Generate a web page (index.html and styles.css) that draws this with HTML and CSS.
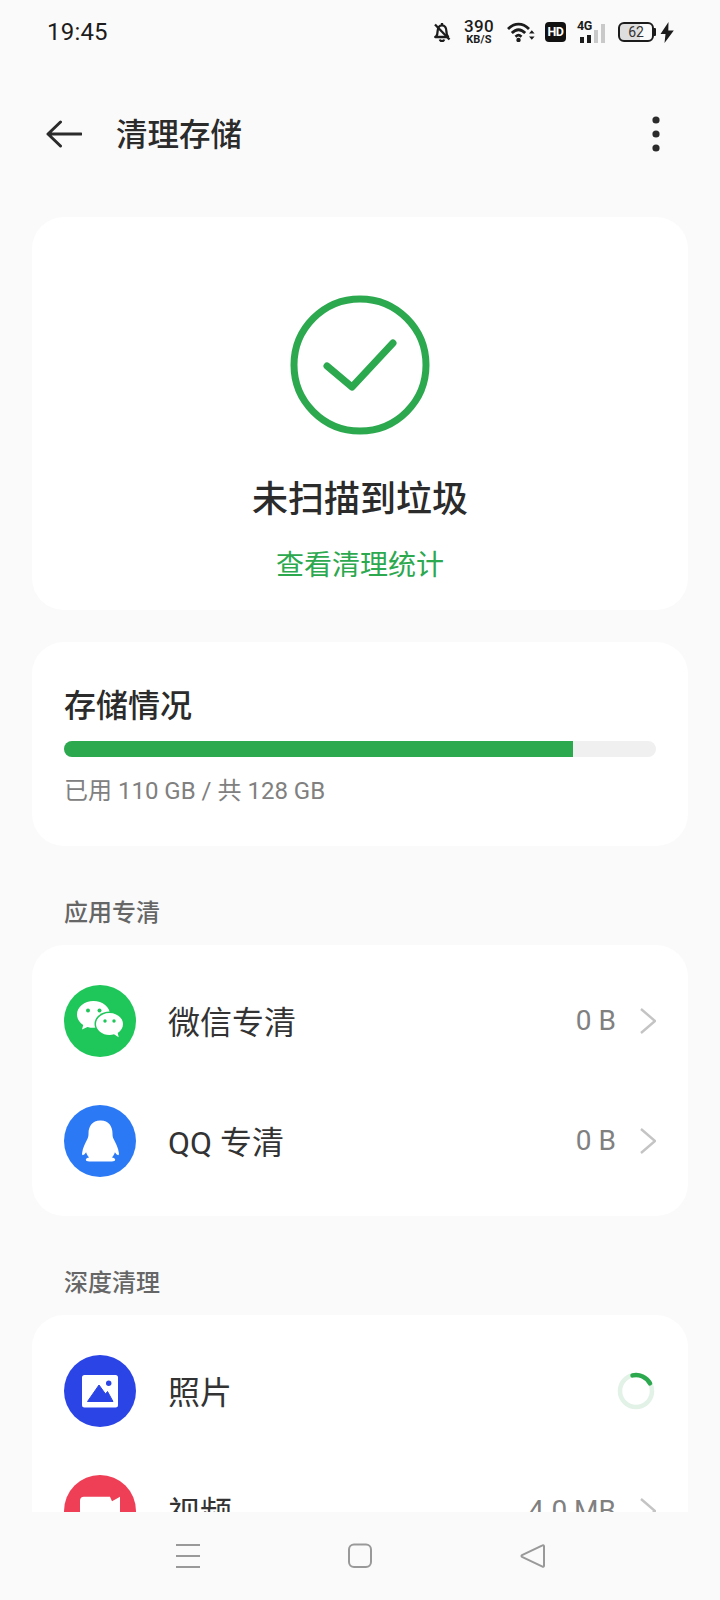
FILE: index.html
```html
<!DOCTYPE html>
<html lang="zh-CN">
<head>
<meta charset="utf-8">
<title>清理存储</title>
<link rel="stylesheet" href="styles.css">
</head>
<body>
<div class="phone">
  <div class="status">
    <span class="time">19:45</span>
    <div class="status-icons">
      <svg class="ic-bell" width="18" height="20" viewBox="0 0 18 20"><path d="M3 14.500c1.400-1.400 1.600-3 1.600-5.200C4.600 5.800 6.400 3.400 9 3.400s4.400 2.400 4.400 5.900c0 2.200.2 3.800 1.600 5.200v.5H2.200z" fill="none" stroke="#1c1c1c" stroke-width="2.300" stroke-linejoin="round"/><path d="M9 1v2M6.800 17.500a2.300 2.300 0 0 0 4.400 0" fill="none" stroke="#1c1c1c" stroke-width="2.300"/><path d="M2 2.500l14.500 15" stroke="#1c1c1c" stroke-width="2.300"/></svg>
      <div class="speed"><span class="speed-num">390</span><span class="speed-unit">KB/S</span></div>
      <svg class="ic-wifi" width="28" height="20" viewBox="0 0 28 20"><path d="M1 7C7.500 .5 15.500 .5 22 7M4.800 11c4.500-4.500 8.900-4.500 13.400 0M8.500 14.800c2.500-2.200 3.500-2.200 6 0" fill="none" stroke="#1c1c1c" stroke-width="2.800"/><circle cx="11.500" cy="18" r="2.200" fill="#1c1c1c"/><path d="M22 11.500l2.800-3.200 2.800 3.200zM22 14.500l2.800 3.200 2.800-3.200z" fill="#1c1c1c"/></svg>
      <span class="hd">HD</span>
      <div class="net">
        <span class="net-label">4G</span>
        <div class="bars"><i class="bar b1"></i><i class="bar b2"></i><i class="bar b3 off"></i><i class="bar b4 off"></i></div>
      </div>
      <div class="battery"><div class="batt-body"><span class="batt-num">62</span></div><i class="batt-nub"></i></div>
      <svg class="ic-bolt" width="14" height="21" viewBox="0 0 14 21"><path d="M8.500 0L.5 12h5L4.500 21 13.800 8.500H8.300z" fill="#1c1c1c"/></svg>
    </div>
  </div>

  <header class="header">
    <svg class="back" width="36" height="28" viewBox="0 0 36 28"><path d="M35 14H2M14.500 2L2 14l12.500 12" fill="none" stroke="#2b2b2b" stroke-width="3" stroke-linecap="round" stroke-linejoin="round"/></svg>
    <h1 class="title">清理存储</h1>
    <svg class="more" width="8" height="36" viewBox="0 0 8 36"><circle cx="4" cy="4" r="3.600" fill="#2b2b2b"/><circle cx="4" cy="18" r="3.600" fill="#2b2b2b"/><circle cx="4" cy="32" r="3.600" fill="#2b2b2b"/></svg>
  </header>

  <main class="content">
    <section class="card card-result">
      <svg class="check" width="140" height="140" viewBox="0 0 140 140"><circle cx="70" cy="70" r="66" fill="none" stroke="#2ca84f" stroke-width="7"/><path d="M37 71l25 21 41-44" fill="none" stroke="#2ca84f" stroke-width="7" stroke-linecap="round" stroke-linejoin="round"/></svg>
      <div class="result-title">未扫描到垃圾</div>
      <div class="result-link">查看清理统计</div>
    </section>

    <section class="card card-storage">
      <div class="storage-title">存储情况</div>
      <div class="progress"><div class="progress-fill"></div></div>
      <div class="storage-text">已用 110 GB / 共 128 GB</div>
    </section>

    <div class="section-label">应用专清</div>
    <section class="card card-list">
      <div class="row">
        <svg class="app-icon" width="72" height="72" viewBox="0 0 72 72"><circle cx="36" cy="36" r="36" fill="#1fc659"/><path d="M29.500 16C20.400 16 13 22 13 29.500c0 4.300 2.400 8 6.200 10.500L18 44.500l5.500-2.600c1.900.6 3.900.9 6 .9 9.100 0 16.500-6 16.500-13.300S38.600 16 29.500 16z" fill="#fff"/><ellipse cx="45.500" cy="39" rx="15" ry="12.500" fill="#1fc659"/><path d="M45.500 28C38 28 32 33 32 39s6 11 13.500 11c1.600 0 3.100-.2 4.500-.7l4.700 2.900-1-4.300C57 45.900 59 42.700 59 39c0-6-6-11-13.500-11z" fill="#fff"/><circle cx="24" cy="25.500" r="2" fill="#1fc659"/><circle cx="35.500" cy="25.500" r="2" fill="#1fc659"/><circle cx="41" cy="36" r="1.700" fill="#1fc659"/><circle cx="50" cy="36" r="1.700" fill="#1fc659"/></svg>
        <span class="row-name">微信专清</span>
        <span class="row-value">0 B</span>
        <svg class="chev" width="18" height="28" viewBox="0 0 18 28"><path d="M3 2l14 12L3 26" fill="none" stroke="#c4c4c4" stroke-width="2.400"/></svg>
      </div>
      <div class="row">
        <svg class="app-icon" width="72" height="72" viewBox="0 0 72 72"><circle cx="36" cy="36" r="36" fill="#2c79f6"/><path d="M36 15.500c-7.500 0-11.500 5.800-11.500 13 0 1.900-.2 3.500-1 5.300-2 4-4.900 9.500-5.400 14.200-.2 1.600.3 2.300 1 2.100.8-.2 2-1.300 3-2.900.6 2 1.500 3.800 3 5.300-1.800.4-3.300 1-3.300 2.300 0 1.200 1.300 1.700 3.400 1.700h22.600c2.100 0 3.400-.5 3.400-1.700 0-1.300-1.500-1.900-3.300-2.300 1.500-1.500 2.400-3.300 3-5.300 1 1.600 2.200 2.700 3 2.900.7.200 1.200-.5 1-2.100-.5-4.700-3.400-10.200-5.400-14.200-.8-1.800-1-3.400-1-5.300 0-7.200-4-13-11.500-13z" fill="#fff"/></svg>
        <span class="row-name">QQ 专清</span>
        <span class="row-value">0 B</span>
        <svg class="chev" width="18" height="28" viewBox="0 0 18 28"><path d="M3 2l14 12L3 26" fill="none" stroke="#c4c4c4" stroke-width="2.400"/></svg>
      </div>
    </section>

    <div class="section-label">深度清理</div>
    <section class="card card-list">
      <div class="row">
        <svg class="app-icon" width="72" height="72" viewBox="0 0 72 72"><circle cx="36" cy="36" r="36" fill="#2b44e6"/><rect x="18" y="20" width="36" height="32.500" rx="2.500" fill="#fff"/><path d="M23.500 46.500l11.500-16.500 6.500 9 2-2.500 5.500 10z" fill="#2b44e6" stroke="#2b44e6" stroke-width="1" stroke-linejoin="round"/><circle cx="44.700" cy="28.300" r="2.700" fill="#2b44e6"/></svg>
        <span class="row-name">照片</span>
        <svg class="spinner" width="40" height="40" viewBox="0 0 40 40"><circle cx="20" cy="20" r="16" fill="none" stroke="#e2f2e7" stroke-width="4.500"/><path d="M16.500 4.400A16 16 0 0 1 34 12.300" fill="none" stroke="#2ca84f" stroke-width="4.500" stroke-linecap="round"/></svg>
      </div>
      <div class="row">
        <svg class="app-icon" width="72" height="72" viewBox="0 0 72 72"><circle cx="36" cy="36" r="36" fill="#ee3f57"/><path d="M20 21.700h26l2 4.500 8-4.500V50a3 3 0 0 1-3 3H19a3 3 0 0 1-3-3V25.700a4 4 0 0 1 4-4z" fill="#fff"/></svg>
        <span class="row-name">视频</span>
        <span class="row-value">4.0 MB</span>
        <svg class="chev" width="18" height="28" viewBox="0 0 18 28"><path d="M3 2l14 12L3 26" fill="none" stroke="#c4c4c4" stroke-width="2.400"/></svg>
      </div>
    </section>
  </main>

  <nav class="navbar">
    <svg width="28" height="26" viewBox="0 0 28 26"><path d="M2 2h24M2 13h24M2 24h24" stroke="#999" stroke-width="2"/></svg>
    <svg width="28" height="26" viewBox="0 0 28 26"><rect x="3" y="1.500" width="22" height="22.500" rx="5" fill="none" stroke="#999" stroke-width="2"/></svg>
    <svg width="28" height="26" viewBox="0 0 28 26"><path d="M26 3.200v19.600c0 .8-.8 1.300-1.500.9L4 13.900c-.7-.4-.7-1.300 0-1.700L24.500 2.300c.7-.4 1.500.1 1.500.9z" fill="none" stroke="#999" stroke-width="2" stroke-linejoin="round"/></svg>
  </nav>
</div>
</body>
</html>
```

FILE: styles.css
```css
* { box-sizing: border-box; }
html, body { margin: 0; padding: 0; }
body {
  background: #fafafa;
  color: #2b2b2b;
  font-family: Roboto, "Noto Sans CJK SC", sans-serif;
}
.phone {
  width: 720px;
  height: 1600px;
  display: flex;
  flex-direction: column;
  overflow: hidden;
}

/* status bar */
.status {
  height: 64px;
  flex: none;
  display: flex;
  align-items: center;
  justify-content: space-between;
  padding: 0 46px 0 47px;
}
.time { font-size: 24px; letter-spacing: 0.2px; color: #1c1c1c; }
.status-icons { display: flex; align-items: center; color: #1c1c1c; }
.ic-bell { margin-right: 13px; }
.speed { display: flex; flex-direction: column; align-items: center; width: 30px; margin-right: 13px; }
.speed-num { font-size: 17px; line-height: 15px; font-weight: 500; letter-spacing: 0.4px; }
.speed-unit { font-size: 11px; line-height: 11px; font-weight: 700; letter-spacing: 0.2px; }
.ic-wifi { margin-right: 10px; }
.hd {
  width: 21px;
  height: 20px;
  margin-right: 11px;
  border-radius: 4px;
  background: #111;
  color: #fff;
  font-size: 12.500px;
  font-weight: 700;
  line-height: 20px;
  text-align: center;
  letter-spacing: -0.4px;
}
.net { position: relative; width: 30px; height: 24px; margin-right: 11px; }
.net-label {
  position: absolute;
  left: 0;
  top: -1px;
  font-size: 12.500px;
  line-height: 13px;
  font-weight: 700;
  letter-spacing: -0.3px;
}
.bars { position: absolute; inset: 0; display: flex; align-items: flex-end; gap: 3px; padding-left: 3px; }
.bar { display: block; width: 4px; background: #1c1c1c; }
.b1 { height: 6px; margin-bottom: 1px; }
.b2 { height: 8px; margin-bottom: 1px; }
.b3 { height: 13px; margin-bottom: 1px; }
.b4 { height: 19px; margin-bottom: 1px; }
.off { background: #c9c9c9; }
.battery { display: flex; align-items: center; margin-right: 4px; }
.batt-body {
  width: 36px;
  height: 20px;
  border: 2px solid #1c1c1c;
  border-radius: 6px;
  background: linear-gradient(90deg, #dedede 62%, #fafafa 62%);
  display: flex;
  align-items: center;
  justify-content: center;
}
.batt-num { font-size: 14px; line-height: 16px; color: #333; }
.batt-nub { display: block; width: 2px; height: 8px; background: #1c1c1c; border-radius: 0 1px 1px 0; }

/* header */
.header {
  height: 140px;
  flex: none;
  display: flex;
  align-items: center;
  padding: 0 60px 0 46px;
}
.back { flex: none; }
.title { flex: 1; margin: 4px 0 0 34px; font-size: 31.500px; line-height: 44px; font-weight: 500; }
.more { flex: none; }

/* content */
.content {
  flex: 1;
  min-height: 0;
  overflow: hidden;
  padding: 13px 32px 0;
}
.card { background: #fff; border-radius: 32px; }

.card-result {
  height: 393px;
  padding-top: 78px;
  margin-bottom: 32px;
  display: flex;
  flex-direction: column;
  align-items: center;
}
.result-title { margin-top: 40px; font-size: 36px; line-height: 50px; font-weight: 500; }
.result-link { margin-top: 21px; font-size: 28px; line-height: 40px; color: #2ca84f; }

.card-storage { padding: 42px 32px 37px; height: 204px; }
.storage-title { font-size: 32px; line-height: 44px; font-weight: 500; }
.progress { height: 16px; margin-top: 13px; border-radius: 8px; background: #f0f0f0; overflow: hidden; }
.progress-fill { width: 509px; height: 100%; background: #2ca84f; }
.storage-text { margin-top: 17px; font-size: 24px; line-height: 34px; color: #808080; }

.section-label {
  margin-top: 50px;
  margin-bottom: 15px;
  padding-left: 32px;
  font-size: 24px;
  line-height: 34px;
  font-weight: 500;
  color: #666;
}

.card-list { padding: 16px 32px 15px; }
.row { height: 120px; display: flex; align-items: center; }
.app-icon { flex: none; }
.row-name { flex: 1; margin-left: 32px; padding-top: 3px; font-size: 32px; line-height: 44px; color: #333; }
.row-value { font-size: 28px; line-height: 40px; color: #808080; }
.chev { flex: none; margin-left: 22px; }
.spinner { flex: none; }

/* nav */
.navbar {
  height: 88px;
  flex: none;
  display: flex;
  align-items: flex-start;
  justify-content: center;
  gap: 144px;
  padding-top: 31px;
  background: #fafafa;
}
```
